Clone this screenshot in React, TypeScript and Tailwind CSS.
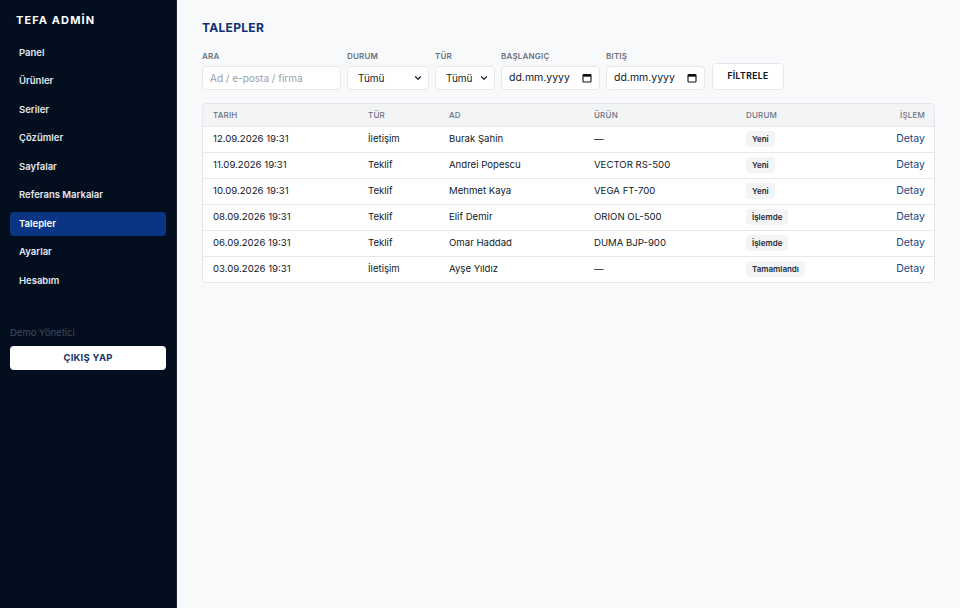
import { ChevronDown } from "lucide-react";

const navItems = [
  "Panel",
  "Ürünler",
  "Seriler",
  "Çözümler",
  "Sayfalar",
  "Referans Markalar",
  "Talepler",
  "Ayarlar",
  "Hesabım",
];

const requests = [
  { date: "12.09.2026 19:31", type: "İletişim", name: "Burak Şahin", product: "—", status: "Yeni" },
  { date: "11.09.2026 19:31", type: "Teklif", name: "Andrei Popescu", product: "VECTOR RS-500", status: "Yeni" },
  { date: "10.09.2026 19:31", type: "Teklif", name: "Mehmet Kaya", product: "VEGA FT-700", status: "Yeni" },
  { date: "08.09.2026 19:31", type: "Teklif", name: "Elif Demir", product: "ORION OL-500", status: "İşlemde" },
  { date: "06.09.2026 19:31", type: "Teklif", name: "Omar Haddad", product: "DUMA BJP-900", status: "İşlemde" },
  { date: "03.09.2026 19:31", type: "İletişim", name: "Ayşe Yıldız", product: "—", status: "Tamamlandı" },
];

const CalendarGlyph = () => (
  <svg width="10" height="10" viewBox="0 0 10 10" className="shrink-0">
    <rect x="1" y="1.5" width="8" height="7.5" rx="0.8" fill="none" stroke="#111" strokeWidth="1.1" />
    <rect x="1" y="1.5" width="8" height="2.2" fill="#111" />
  </svg>
);

const FilterLabel = ({ children }: { children: React.ReactNode }) => (
  <span className="text-[8px] font-semibold uppercase tracking-wide text-gray-500">{children}</span>
);

const FakeSelect = ({ width }: { width: string }) => (
  <div
    className={`${width} h-[24px] flex items-center justify-between rounded border border-gray-200 bg-white pl-[10px] pr-[5px] text-[10px] text-gray-900`}
  >
    <span>Tümü</span>
    <ChevronDown size={10} strokeWidth={3} className="text-gray-800" />
  </div>
);

const FakeDate = ({ width }: { width: string }) => (
  <div
    className={`${width} h-[24px] flex items-center justify-between rounded border border-gray-200 bg-white pl-[7px] pr-[7px] text-[10.5px] text-gray-900`}
  >
    <span>dd.mm.yyyy</span>
    <CalendarGlyph />
  </div>
);

export default function App() {
  return (
    <div className="flex min-h-screen h-[608px] font-['Inter',sans-serif]">
      {/* sidebar */}
      <aside className="w-[177px] shrink-0 bg-[#030f1f] flex flex-col pt-[13px] border-r border-[#1b2736]">
        <h1 className="px-[16px] text-[11px] font-bold tracking-[0.1em] text-white leading-[14px]">
          TEFA ADMİN
        </h1>
        <nav className="mt-[14px] px-[10px] flex flex-col gap-[4.5px]">
          {navItems.map((item) => (
            <div
              key={item}
              className={
                item === "Talepler"
                  ? "h-[24px] flex items-center px-[9px] rounded bg-[#0a3584] text-[9.5px] font-semibold text-white"
                  : "h-[24px] flex items-center px-[9px] rounded text-[9.5px] font-semibold text-[#e3e8ef]"
              }
            >
              {item}
            </div>
          ))}
        </nav>
        <div className="mt-[33px] px-[10px]">
          <p className="text-[9.5px] text-[#3d4a5c]">Demo Yönetici</p>
          <button className="mt-[6px] w-full h-[24px] rounded bg-white text-[9.5px] font-bold tracking-wide text-[#163468]">
            ÇIKIŞ YAP
          </button>
        </div>
      </aside>

      {/* main content */}
      <main className="flex-1 bg-[#f8f9fa] px-[25px] pt-[20px]">
        <h2 className="text-[12px] font-bold tracking-wide text-[#0d3275] leading-[16px]">TALEPLER</h2>

        <div className="mt-[14px] flex items-end gap-[6px]">
          <div className="flex flex-col gap-[4px]">
            <FilterLabel>Ara</FilterLabel>
            <div className="w-[139px] h-[24px] flex items-center rounded border border-gray-200 bg-white px-[7px] text-[10px] text-gray-400">
              Ad / e-posta / firma
            </div>
          </div>
          <div className="flex flex-col gap-[4px]">
            <FilterLabel>Durum</FilterLabel>
            <FakeSelect width="w-[82px]" />
          </div>
          <div className="flex flex-col gap-[4px]">
            <FilterLabel>Tür</FilterLabel>
            <FakeSelect width="w-[60px]" />
          </div>
          <div className="flex flex-col gap-[4px]">
            <FilterLabel>Başlangıç</FilterLabel>
            <FakeDate width="w-[99px]" />
          </div>
          <div className="flex flex-col gap-[4px]">
            <FilterLabel>Bitiş</FilterLabel>
            <FakeDate width="w-[99px]" />
          </div>
          <button className="ml-[1px] w-[72px] h-[27px] rounded border border-gray-200 bg-white text-[8.5px] font-bold tracking-wider text-gray-900">
            FİLTRELE
          </button>
        </div>

        <div className="mt-[13px] rounded border border-gray-200 bg-white overflow-hidden">
          <table className="w-full text-left">
            <thead>
              <tr className="h-[22px] bg-[#f3f4f6] text-[8px] font-medium uppercase tracking-wide text-gray-500">
                <th className="pl-[10px] w-[165px] font-medium">Tarih</th>
                <th className="w-[81px] font-medium">Tür</th>
                <th className="w-[145px] font-medium">Ad</th>
                <th className="w-[152px] font-medium">Ürün</th>
                <th className="font-medium">Durum</th>
                <th className="pr-[9px] text-right font-medium">İşlem</th>
              </tr>
            </thead>
            <tbody className="text-[9.6px] text-gray-900">
              {requests.map((r) => (
                <tr key={r.date} className="h-[26px] border-t border-gray-200">
                  <td className="pl-[10px]">{r.date}</td>
                  <td>{r.type}</td>
                  <td>{r.name}</td>
                  <td>{r.product}</td>
                  <td>
                    <span className="inline-block rounded bg-gray-100 px-[6px] py-[2px] text-[8px] font-semibold text-gray-800">
                      {r.status}
                    </span>
                  </td>
                  <td className="pr-[9px] text-right text-[10.5px] text-[#1d4480]">Detay</td>
                </tr>
              ))}
            </tbody>
          </table>
        </div>
      </main>
    </div>
  );
}
